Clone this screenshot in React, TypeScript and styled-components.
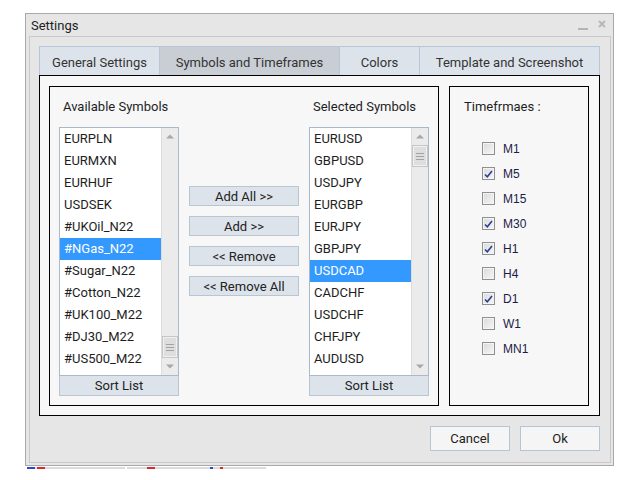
import React from "react";
import styled, { createGlobalStyle } from "styled-components";

const Global = createGlobalStyle`
  html, body { margin: 0; padding: 0; background: #ffffff; }
  body { font-family: Roboto, "Open Sans", sans-serif; color: #222; }
  * { box-sizing: border-box; }
`;

const Page = styled.div`
  padding: 13px 0 0 25px;
`;

const Window = styled.div`
  width: 589px;
  height: 453px;
  border: 1px solid #a9a9a9;
  background: #e6e6e6;
  padding: 0 2px 2px 3px;
  display: flex;
  flex-direction: column;
`;

const TitleBar = styled.div`
  height: 22px;
  display: flex;
  align-items: center;
  padding: 0 5px 0 2px;
`;

const Title = styled.div`
  font-size: 13px;
  color: #222;
  flex: 1;
`;

const TitleIcons = styled.div`
  display: flex;
  align-items: center;
  gap: 10px;
`;

const Client = styled.div`
  flex: 1;
  border: 1px solid #c9c9c9;
  padding: 9px 10px 11px 9px;
  display: flex;
  flex-direction: column;
`;

const Tabs = styled.div`
  display: flex;
  height: 29px;
`;

const Tab = styled.div<{ $w: number; $active?: boolean }>`
  width: ${(p) => p.$w}px;
  height: 29px;
  border: 1px solid #b7c7d7;
  border-bottom: none;
  background: ${(p) => (p.$active ? "#c9ced5" : "#dde3ea")};
  font-size: 13px;
  color: #333;
  display: flex;
  align-items: center;
  justify-content: center;
  padding-top: 3px;
  & + & { margin-left: -1px; }
`;

const ContentBox = styled.div`
  height: 341px;
  border: 1px solid #000;
  background: #f7f7f7;
  padding: 10px 10px 9px 9px;
  display: flex;
  gap: 10px;
`;

const Group = styled.div<{ $w: number }>`
  width: ${(p) => p.$w}px;
  border: 1px solid #000;
`;

const SymbolsGroup = styled(Group)`
  padding: 10px 9px 9px 9px;
  display: flex;
  gap: 10px;
`;

const ListColumn = styled.div`
  width: 120px;
  display: flex;
  flex-direction: column;
`;

const Label = styled.div<{ $indent: number }>`
  height: 20px;
  line-height: 20px;
  font-size: 13px;
  color: #1e1e1e;
  padding-left: ${(p) => p.$indent}px;
  margin-bottom: 10px;
`;

const ListBox = styled.div`
  height: 249px;
  border: 1px solid #a9b9c9;
  background: #fff;
  display: flex;
`;

const Items = styled.div`
  flex: 1;
  overflow: hidden;
`;

const Item = styled.div<{ $sel?: boolean }>`
  height: 22px;
  line-height: 22px;
  padding-left: 4px;
  font-size: 13px;
  white-space: nowrap;
  color: ${(p) => (p.$sel ? "#fff" : "#1e1e1e")};
  background: ${(p) => (p.$sel ? "#3399ff" : "transparent")};
`;

const ScrollBar = styled.div`
  width: 17px;
  background: #ebebeb;
  border-left: 1px solid #dcdcdc;
  display: flex;
  flex-direction: column;
`;

const Arrow = styled.div`
  height: 17px;
  display: flex;
  align-items: center;
  justify-content: center;
`;

const Track = styled.div`
  flex: 1;
  display: flex;
  flex-direction: column;
`;

const Thumb = styled.div<{ $top: number }>`
  margin-top: ${(p) => p.$top}px;
  height: 22px;
  margin-left: 0;
  margin-right: 0;
  border: 1px solid #c6c6c6;
  background: #dedede;
  box-shadow: inset 0 0 0 1px #f0f0f0;
  display: flex;
  flex-direction: column;
  align-items: center;
  justify-content: center;
  gap: 2px;
`;

const Grip = styled.div`
  width: 8px;
  height: 1px;
  background: #a2a2a2;
`;

const SortButton = styled.div`
  height: 20px;
  border: 1px solid #b9c5d1;
  border-top: none;
  background: #dde3ea;
  font-size: 13px;
  color: #222;
  display: flex;
  align-items: center;
  justify-content: center;
`;

const ButtonsColumn = styled.div`
  width: 110px;
  display: flex;
  flex-direction: column;
  gap: 10px;
  padding-top: 89px;
`;

const ActionButton = styled.div`
  height: 20px;
  border: 1px solid #b9c5d1;
  background: #dde3ea;
  font-size: 13px;
  color: #222;
  display: flex;
  align-items: center;
  justify-content: center;
`;

const TimeGroup = styled(Group)`
  padding: 10px 0 0 14px;
`;

const CheckList = styled.div`
  margin-top: 19px;
  display: flex;
  flex-direction: column;
`;

const CheckRow = styled.div`
  height: 25px;
  display: flex;
  align-items: center;
  padding-left: 18px;
  gap: 8px;
`;

const Box = styled.div`
  width: 13px;
  height: 13px;
  border: 1px solid #8f9090;
  background: linear-gradient(135deg, #dadada, #f6f6f6);
  box-shadow: inset 0 0 0 1px #f4f4f4;
  display: flex;
  align-items: center;
  justify-content: center;
`;

const CheckLabel = styled.div`
  font-family: "Liberation Sans", Arial, sans-serif;
  font-size: 12px;
  color: #1c1c48;
`;

const Footer = styled.div`
  margin-top: 10px;
  height: 25px;
  display: flex;
  justify-content: flex-end;
  gap: 10px;
`;

const DialogButton = styled.div`
  width: 80px;
  height: 25px;
  border: 1px solid #b5c5d5;
  background: #f5f5f5;
  font-size: 13px;
  color: #222;
  display: flex;
  align-items: center;
  justify-content: center;
`;

const Strip = styled.div`
  margin-top: 1px;
  padding-left: 2px;
  display: flex;
  height: 2px;
`;

const Seg = styled.div<{ $w: number; $c: string }>`
  width: ${(p) => p.$w}px;
  height: 2px;
  background: ${(p) => p.$c};
`;

const available = [
  "EURPLN", "EURMXN", "EURHUF", "USDSEK", "#UKOil_N22", "#NGas_N22",
  "#Sugar_N22", "#Cotton_N22", "#UK100_M22", "#DJ30_M22", "#US500_M22",
];
const selected = [
  "EURUSD", "GBPUSD", "USDJPY", "EURGBP", "EURJPY", "GBPJPY", "USDCAD",
  "CADCHF", "USDCHF", "CHFJPY", "AUDUSD",
];
const timeframes: [string, boolean][] = [
  ["M1", false], ["M5", true], ["M15", false], ["M30", true], ["H1", true],
  ["H4", false], ["D1", true], ["W1", false], ["MN1", false],
];

const Up = () => (
  <svg width="8" height="5" viewBox="0 0 8 5"><path d="M0 4.5 L4 0.5 L8 4.5 Z" fill="#a8a8a8" /></svg>
);
const Down = () => (
  <svg width="8" height="5" viewBox="0 0 8 5"><path d="M0 0.5 L4 4.5 L8 0.5 Z" fill="#a8a8a8" /></svg>
);

function SymbolList({ items, sel, thumbTop }: { items: string[]; sel: string; thumbTop: number }) {
  return (
    <ListBox>
      <Items>
        {items.map((s) => (
          <Item key={s} $sel={s === sel}>{s}</Item>
        ))}
      </Items>
      <ScrollBar>
        <Arrow><Up /></Arrow>
        <Track>
          <Thumb $top={thumbTop}>
            <Grip /><Grip /><Grip />
          </Thumb>
        </Track>
        <Arrow><Down /></Arrow>
      </ScrollBar>
    </ListBox>
  );
}

export default function App() {
  return (
    <Page>
      <Global />
      <Window>
        <TitleBar>
          <Title>Settings</Title>
          <TitleIcons>
            <svg width="10" height="12" viewBox="0 0 10 12"><rect x="0" y="9" width="10" height="2" fill="#b4b4b4" /></svg>
            <svg width="8" height="12" viewBox="0 0 8 12"><path d="M1 2 L7 8 M7 2 L1 8" stroke="#b8b8b8" strokeWidth="2" /></svg>
          </TitleIcons>
        </TitleBar>
        <Client>
          <Tabs>
            <Tab $w={121}>General Settings</Tab>
            <Tab $w={181} $active>Symbols and Timeframes</Tab>
            <Tab $w={81}>Colors</Tab>
            <Tab $w={181}>Template and Screenshot</Tab>
          </Tabs>
          <ContentBox>
            <SymbolsGroup $w={390}>
              <ListColumn>
                <Label $indent={4}>Available Symbols</Label>
                <SymbolList items={available} sel="#NGas_N22" thumbTop={191} />
                <SortButton>Sort List</SortButton>
              </ListColumn>
              <ButtonsColumn>
                <ActionButton>Add All &gt;&gt;</ActionButton>
                <ActionButton>Add &gt;&gt;</ActionButton>
                <ActionButton>&lt;&lt; Remove</ActionButton>
                <ActionButton>&lt;&lt; Remove All</ActionButton>
              </ButtonsColumn>
              <ListColumn>
                <Label $indent={4}>Selected Symbols</Label>
                <SymbolList items={selected} sel="USDCAD" thumbTop={0} />
                <SortButton>Sort List</SortButton>
              </ListColumn>
            </SymbolsGroup>
            <TimeGroup $w={140}>
              <Label $indent={0}>Timefrmaes :</Label>
              <CheckList>
                {timeframes.map(([t, on]) => (
                  <CheckRow key={t}>
                    <Box>
                      {on && (
                        <svg width="9" height="8" viewBox="0 0 9 8">
                          <path d="M1 4.5 L3.3 6.8 L8 1" stroke="#2c3f92" strokeWidth="1.6" fill="none" />
                        </svg>
                      )}
                    </Box>
                    <CheckLabel>{t}</CheckLabel>
                  </CheckRow>
                ))}
              </CheckList>
            </TimeGroup>
          </ContentBox>
          <Footer>
            <DialogButton>Cancel</DialogButton>
            <DialogButton>Ok</DialogButton>
          </Footer>
        </Client>
      </Window>
      <Strip>
        <Seg $w={8} $c="#2a48c8" />
        <Seg $w={2} $c="#dcdcdc" />
        <Seg $w={8} $c="#d82a2a" />
        <Seg $w={80} $c="#dcdcdc" />
        <Seg $w={2} $c="#ffffff" />
        <Seg $w={20} $c="#dcdcdc" />
        <Seg $w={8} $c="#d82a2a" />
        <Seg $w={55} $c="#dcdcdc" />
        <Seg $w={3} $c="#2a48c8" />
        <Seg $w={7} $c="#dcdcdc" />
        <Seg $w={3} $c="#d82a2a" />
        <Seg $w={43} $c="#dcdcdc" />
      </Strip>
    </Page>
  );
}
